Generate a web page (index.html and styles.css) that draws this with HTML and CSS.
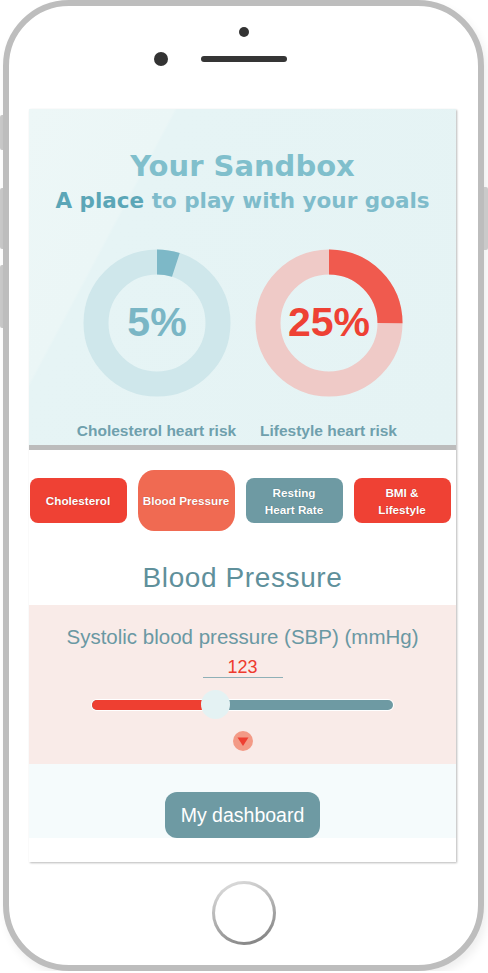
FILE: index.html
```html
<!DOCTYPE html>
<html>
<head>
    <title>Your Sandbox</title>
    <link rel="stylesheet" href="styles.css">
</head>
<body>

    <div class="device">

        <!-- side keys -->
        <div class="keys keys-left">
            <span class="key key-mute"></span>
            <span class="key key-vol"></span>
            <span class="key key-vol2"></span>
        </div>

        <div class="phone">
            <div class="phone-top">
                <span class="sensor"></span>
                <div class="earpiece-row">
                    <span class="camera"></span>
                    <span class="speaker"></span>
                </div>
            </div>

            <div class="screen">
                <section class="sandbox">
                    <h1 class="title">Your Sandbox</h1>
                    <p class="subtitle"><b>A place</b> to play with your goals</p>

                    <div class="risks">
                        <figure class="risk">
                            <svg class="donut" width="148" height="148" viewBox="0 0 148 148">
                                <circle cx="74" cy="74" r="61" class="ring ring-blue"></circle>
                                <circle cx="74" cy="74" r="61" class="arc arc-blue" stroke-dasharray="19.2 400" transform="rotate(-90 74 74)"></circle>
                                <text x="74" y="87" class="pct pct-blue">5%</text>
                            </svg>
                            <figcaption>Cholesterol heart risk</figcaption>
                        </figure>
                        <figure class="risk">
                            <svg class="donut" width="148" height="148" viewBox="0 0 148 148">
                                <circle cx="74" cy="74" r="61" class="ring ring-red"></circle>
                                <circle cx="74" cy="74" r="61" class="arc arc-red" stroke-dasharray="95.8 400" transform="rotate(-90 74 74)"></circle>
                                <text x="74" y="87" class="pct pct-red">25%</text>
                            </svg>
                            <figcaption>Lifestyle heart risk</figcaption>
                        </figure>
                    </div>
                </section>

                <nav class="tabs">
                    <a class="tab tab-red">Cholesterol</a>
                    <a class="tab tab-active">Blood Pressure</a>
                    <a class="tab tab-teal">Resting<br>Heart Rate</a>
                    <a class="tab tab-red">BMI &amp;<br>Lifestyle</a>
                </nav>

                <h2 class="topic">Blood Pressure</h2>

                <section class="measure">
                    <p class="measure-label">Systolic blood pressure (SBP) (mmHg)</p>
                    <div class="measure-value">123</div>
                    <div class="slider">
                        <div class="track">
                            <div class="track-fill" style="width: 41%"></div>
                        </div>
                        <span class="thumb" style="left: 41%"></span>
                    </div>
                    <svg class="more" width="20" height="20" viewBox="0 0 20 20">
                        <circle cx="10" cy="10" r="10" fill="#f39a86"></circle>
                        <polygon points="4.5,6.5 15.5,6.5 10,15" fill="#ee3f31"></polygon>
                    </svg>
                </section>

                <div class="actions">
                    <button class="dashboard">My dashboard</button>
                </div>
            </div>

            <div class="phone-bottom">
                <span class="home"></span>
            </div>
        </div>

        <div class="keys keys-right">
            <span class="key key-power"></span>
        </div>
    </div>

</body>
</html>
```

FILE: styles.css
```css
/* page */
body {
    margin: 0;
    background-color: #fff;
    font-family: "Liberation Sans", Arial, sans-serif;
}

.device {
    display: flex;
    align-items: flex-start;
    width: 488px;
}

/* side keys */
.keys {
    display: flex;
    flex-direction: column;
    width: 3px;
}
.keys-right {
    width: 4px;
}
.key {
    display: block;
    background-color: #cacaca;
    border-radius: 2px 0 0 2px;
}
.keys-right .key {
    border-radius: 0 2px 2px 0;
}
.key-mute {
    margin-top: 115px;
    height: 35px;
}
.key-vol {
    margin-top: 38px;
    height: 61px;
}
.key-vol2 {
    margin-top: 16px;
    height: 63px;
}
.key-power {
    margin-top: 187px;
    height: 63px;
}

/* phone body */
.phone {
    box-sizing: border-box;
    width: 481px;
    height: 971px;
    border: 6px solid #bdbdbd;
    border-radius: 66px;
    background-color: #fff;
    box-shadow: 3px 5px 10px rgba(0, 0, 0, 0.07);
    display: flex;
    flex-direction: column;
    align-items: center;
}

.phone-top {
    height: 103px;
    width: 100%;
    display: flex;
    flex-direction: column;
    align-items: center;
}
.sensor {
    width: 10px;
    height: 10px;
    margin-top: 21px;
    border-radius: 50%;
    background-color: #333;
}
.earpiece-row {
    width: 180px;
    margin-top: 15px;
    display: flex;
    align-items: center;
}
.camera {
    width: 14px;
    height: 14px;
    border-radius: 50%;
    background-color: #333;
}
.speaker {
    width: 86px;
    height: 6px;
    margin-left: 33px;
    border-radius: 3px;
    background-color: #353535;
}

.phone-bottom {
    flex: 1;
    display: flex;
    align-items: flex-start;
    justify-content: center;
}
.home {
    box-sizing: border-box;
    width: 64px;
    height: 64px;
    margin-top: 19px;
    border-radius: 50%;
    border: 3px solid transparent;
    background: linear-gradient(#fff, #fff) padding-box,
                linear-gradient(160deg, #e4e4e4, #9a9a9a 70%, #7a7a7a) border-box;
}

/* screen */
.screen {
    width: 427px;
    height: 753px;
    margin-left: -2px;
    background-color: #fff;
    box-shadow: 1px 1px 2px rgba(0, 0, 0, 0.28);
    display: flex;
    flex-direction: column;
    text-align: center;
}

/* sandbox header */
.sandbox {
    padding: 40px 0 5px;
    border-bottom: 5px solid #bcbcbc;
    background: linear-gradient(118deg, #edf7f7 0%, #ebf6f6 24%, #e6f4f5 24.5%, #e5f3f4 100%);
}
.title {
    margin: 0;
    font-family: "DejaVu Sans", sans-serif;
    font-size: 29px;
    line-height: 34px;
    font-weight: bold;
    color: #80bfcc;
}
.subtitle {
    margin: 5px 0 0;
    font-family: "DejaVu Sans", sans-serif;
    font-size: 21.5px;
    line-height: 25px;
    font-weight: bold;
    color: #7fbccb;
}
.subtitle b {
    color: #5ba6b7;
}

.risks {
    margin-top: 36px;
    display: grid;
    grid-template-columns: 172px 172px;
    justify-content: center;
}
.risk {
    margin: 0;
    display: flex;
    flex-direction: column;
    align-items: center;
}
.ring {
    fill: none;
    stroke-width: 25;
}
.ring-blue {
    stroke: #cfe7eb;
}
.ring-red {
    stroke: #efcac7;
}
.arc {
    fill: none;
    stroke-width: 25;
}
.arc-blue {
    stroke: #7db8c7;
}
.arc-red {
    stroke: #f05a4e;
}
.pct {
    font-family: "Liberation Sans", Arial, sans-serif;
    font-size: 41px;
    font-weight: bold;
    text-anchor: middle;
}
.pct-blue {
    fill: #7ab6c5;
}
.pct-red {
    fill: #ee4134;
}
.risk figcaption {
    margin-top: 25px;
    font-size: 15.5px;
    line-height: 18px;
    font-weight: bold;
    color: #6fa0ad;
    white-space: nowrap;
}

/* tabs */
.tabs {
    padding: 20px 5px 0 0;
    display: flex;
    align-items: center;
    justify-content: center;
    gap: 11px;
}
.tab {
    box-sizing: border-box;
    width: 97px;
    height: 45px;
    border-radius: 8px;
    display: flex;
    align-items: center;
    justify-content: center;
    font-size: 11.7px;
    line-height: 17px;
    font-weight: bold;
    color: #fff;
    text-shadow: 0 0 1px rgba(120, 20, 10, 0.5);
}
.tab-red {
    background-color: #ef4134;
}
.tab-teal {
    background-color: #6e9aa3;
    text-shadow: 0 0 1px rgba(30, 60, 70, 0.5);
}
.tab-active {
    height: 61px;
    border-radius: 16px / 18px;
    background-color: #f06a52;
}

/* topic heading */
.topic {
    margin: 32px 0 12px;
    font-size: 28px;
    line-height: 30px;
    font-weight: normal;
    letter-spacing: 0.6px;
    color: #5f909b;
}

/* measurement panel */
.measure {
    padding: 20px 0 13px;
    background-color: #f9ebe8;
    display: flex;
    flex-direction: column;
    align-items: center;
}
.measure-label {
    margin: 0;
    font-size: 20.5px;
    line-height: 24px;
    color: #6a98a3;
}
.measure-value {
    width: 80px;
    margin-top: 8px;
    border-bottom: 1px solid #8fb0b7;
    font-size: 18px;
    line-height: 20px;
    color: #ee3a2e;
}
.slider {
    position: relative;
    width: 301px;
    height: 29px;
    margin-top: 12px;
    display: flex;
    align-items: center;
}
.track {
    width: 100%;
    height: 10px;
    border-radius: 5px;
    background-color: #6e9aa3;
    box-shadow: 0 0 0 1px #fff;
    overflow: hidden;
}
.track-fill {
    height: 100%;
    background-color: #ee3f31;
}
.thumb {
    position: absolute;
    top: 0;
    width: 29px;
    height: 29px;
    margin-left: -14px;
    border-radius: 50%;
    background-color: #e4f2f3;
}
.more {
    margin-top: 12px;
}

/* footer action */
.actions {
    padding-top: 28px;
    background-color: #f5fbfc;
}
.dashboard {
    display: block;
    margin: 0 auto;
    width: 155px;
    height: 46px;
    border: 0;
    border-radius: 12px;
    background-color: #6e9aa3;
    font-family: "Liberation Sans", Arial, sans-serif;
    font-size: 19.5px;
    color: #fff;
}
```
